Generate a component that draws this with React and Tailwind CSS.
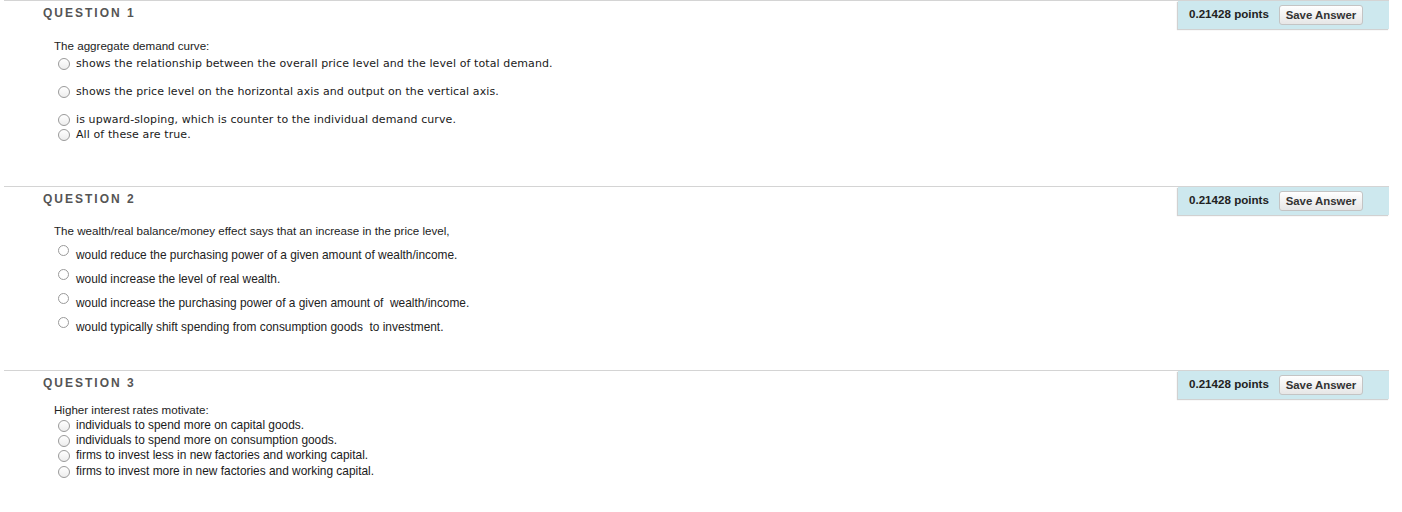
import React from "react";

const sans = "font-['Liberation_Sans',Arial,sans-serif]";

function Radio({ up }) {
  return (
    <span
      className={
        up
          ? "inline-block w-[11px] h-[11px] shrink-0 rounded-full border border-[#9a9a9a] bg-white -translate-y-[5px]"
          : "inline-block w-[12px] h-[12px] shrink-0 rounded-full border border-[#9a9a9a] bg-linear-to-b from-white to-[#ededed]"
      }
    />
  );
}

function Header({ n }) {
  return (
    <div className="flex justify-between items-start h-[28px]">
      <div className={`${sans} pl-[39px] pt-[5px] text-[12px] leading-[14px] font-bold tracking-[2px] text-[#555]`}>
        QUESTION {n}
      </div>
      <div className="w-[211px] h-[28px] bg-[#cde8ee] shadow-[-1px_1px_1px_rgba(0,0,0,0.18)] flex items-start pl-[11px] pt-[4px]">
        <span className={`${sans} text-[11.6px] leading-[18px] font-bold text-[#222]`}>0.21428 points</span>
        <button className={`${sans} ml-[10px] w-[84px] h-[20px] rounded-[3px] border border-[#c4c4c4] bg-linear-to-b from-white to-[#e6e6e6] text-[11.4px] font-bold text-[#333] leading-[18px]`}>
          Save Answer
        </button>
      </div>
    </div>
  );
}

function Opt({ children, font, up, mt }) {
  return (
    <div className={`flex items-center h-[15px] pl-[54px] ${mt}`}>
      <Radio up={up} />
      <span className={up ? `ml-[7px] ${font} text-[#222] whitespace-pre` : `ml-[6px] ${font} text-[#1a1a1a] whitespace-pre`}>{children}</span>
    </div>
  );
}

const q1font = "font-['DejaVu_Sans',Verdana,sans-serif] text-[11px] leading-[15px] tracking-[0.1px]";
const qText = `${sans} text-[11.6px] leading-[15px]`;
const q2font = `${sans} text-[11.9px] leading-[15px]`;

export default function App() {
  return (
    <div className="w-[1402px] h-[512px] bg-white overflow-hidden">
      <div className="ml-[4px] mr-[13px]">
        {/* Question 1 */}
        <div className="border-t border-[#d4d4d4]">
          <Header n={1} />
          <div className={`pl-[50px] mt-[9px] h-[15px] ${qText} text-[#222]`}>The aggregate demand curve:</div>
          <Opt font={q1font} mt="mt-[3px]">shows the relationship between the overall price level and the level of total demand.</Opt>
          <Opt font={q1font} mt="mt-[13px]">shows the price level on the horizontal axis and output on the vertical axis.</Opt>
          <Opt font={q1font} mt="mt-[13px]">is upward-sloping, which is counter to the individual demand curve.</Opt>
          <Opt font={q1font} mt="mt-0">All of these are true.</Opt>
        </div>

        {/* Question 2 */}
        <div className="border-t border-[#d4d4d4] mt-[44px]">
          <Header n={2} />
          <div className={`pl-[50px] mt-[8px] h-[15px] ${qText} text-[#222]`}>The wealth/real balance/money effect says that an increase in the price level,</div>
          <Opt font={q2font} up mt="mt-[10px]">would reduce the purchasing power of a given amount of wealth/income.</Opt>
          <Opt font={q2font} up mt="mt-[9px]">would increase the level of real wealth.</Opt>
          <Opt font={q2font} up mt="mt-[9px]">{"would increase the purchasing power of a given amount of  wealth/income."}</Opt>
          <Opt font={q2font} up mt="mt-[9px]">{"would typically shift spending from consumption goods  to investment."}</Opt>
        </div>

        {/* Question 3 */}
        <div className="border-t border-[#d4d4d4] mt-[35px]">
          <Header n={3} />
          <div className={`pl-[50px] mt-[3px] h-[15px] ${qText} text-[#222]`}>Higher interest rates motivate:</div>
          <Opt font={q2font} mt="mt-[1px]">individuals to spend more on capital goods.</Opt>
          <Opt font={q2font} mt="mt-0">individuals to spend more on consumption goods.</Opt>
          <Opt font={q2font} mt="mt-0">firms to invest less in new factories and working capital.</Opt>
          <Opt font={q2font} mt="mt-px">firms to invest more in new factories and working capital.</Opt>
        </div>
      </div>
    </div>
  );
}
